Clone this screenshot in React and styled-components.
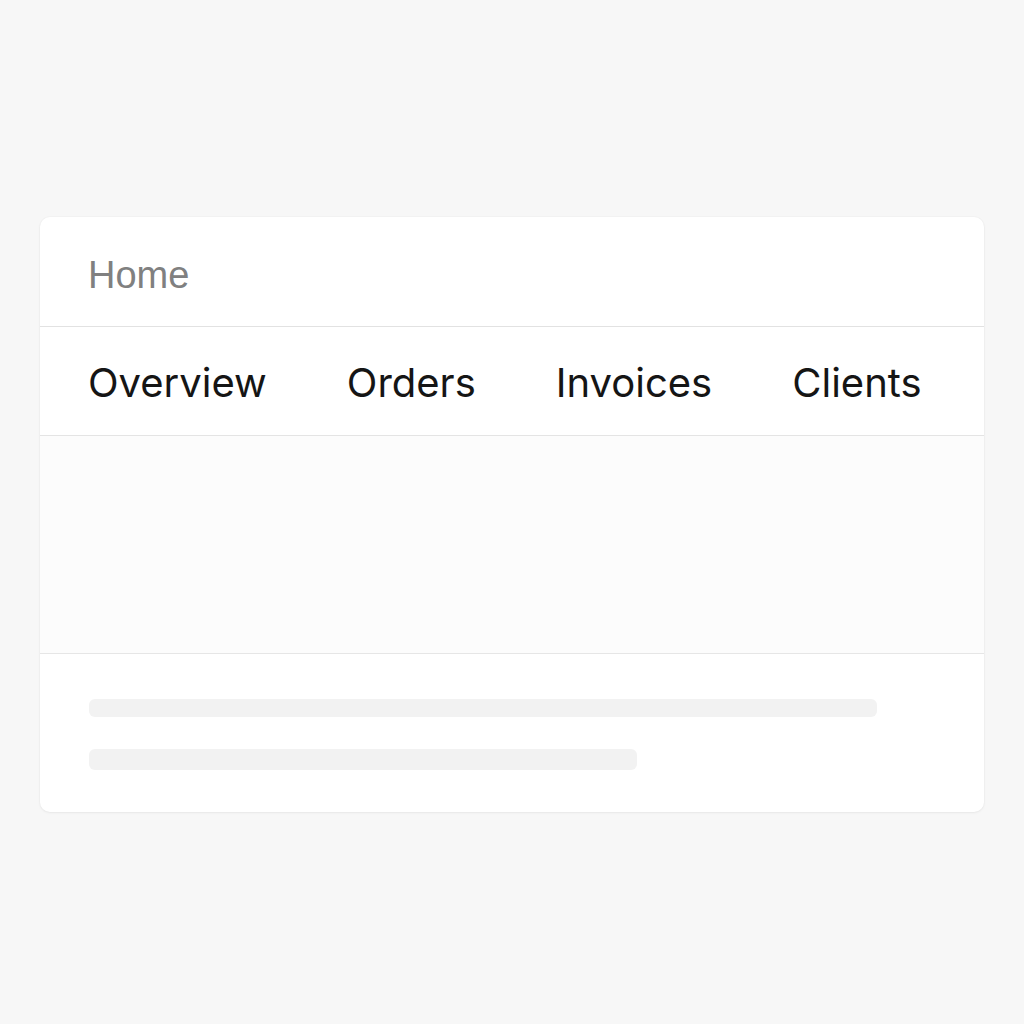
import React from "react";
import styled, { createGlobalStyle } from "styled-components";

const GlobalStyle = createGlobalStyle`
  html, body {
    margin: 0;
    padding: 0;
    background: #f7f7f7;
    font-family: Inter, "Noto Sans", sans-serif;
  }
`;

const Page = styled.main`
  min-height: 1024px;
  padding: 217px 40px 0;
  box-sizing: border-box;
`;

const Card = styled.section`
  background: #fff;
  border-radius: 10px;
  box-shadow: 0 1px 3px rgba(0, 0, 0, 0.05), 0 0 0 1px rgba(0, 0, 0, 0.015);
  overflow: hidden;
`;

const Header = styled.header`
  height: 110px;
  display: flex;
  align-items: center;
  padding: 8px 48px 0;
  border-bottom: 1px solid #e2e2e2;
  box-sizing: border-box;
`;

const Crumb = styled.span`
  font-size: 38px;
  color: #808080;
  font-family: "Liberation Sans", Arial, sans-serif;
`;

const Tabs = styled.nav`
  height: 109px;
  display: flex;
  align-items: center;
  gap: 80px;
  padding: 2px 48px 0;
  border-bottom: 1px solid #e4e4e4;
  box-sizing: border-box;
`;

const Tab = styled.a`
  font-size: 40px;
  color: #151515;
  text-decoration: none;
`;

const Panel = styled.div`
  height: 217px;
  background: #fcfcfc;
  border-bottom: 1px solid #e6e6e6;
`;

const Footer = styled.div`
  display: flex;
  flex-direction: column;
  gap: 32px;
  padding: 45px 49px 42px;
`;

const Line = styled.div`
  height: ${(p) => p.$h}px;
  width: ${(p) => p.$w}px;
  background: #f2f2f2;
  border-radius: 6px;
`;

export default function App() {
  return (
    <>
      <GlobalStyle />
      <Page>
        <Card>
          <Header>
            <Crumb>Home</Crumb>
          </Header>
          <Tabs>
            {["Overview", "Orders", "Invoices", "Clients"].map((t) => (
              <Tab key={t}>{t}</Tab>
            ))}
          </Tabs>
          <Panel />
          <Footer>
            <Line $w={788} $h={18} />
            <Line $w={548} $h={21} />
          </Footer>
        </Card>
      </Page>
    </>
  );
}
